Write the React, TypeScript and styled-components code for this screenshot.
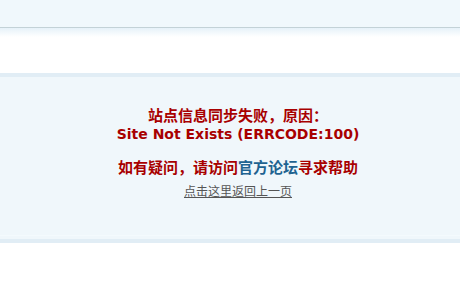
import React from "react";
import styled, { createGlobalStyle } from "styled-components";

const GlobalStyle = createGlobalStyle`
  html, body {
    margin: 0;
    padding: 0;
    background: #ffffff;
  }
  body {
    font-family: "Noto Sans CJK SC", "DejaVu Sans", sans-serif;
  }
`;

const Header = styled.div`
  height: 27px;
  background-color: #f0f8fc;
  border-bottom: 1px solid #c3d2d7;
`;

const Body = styled.div`
  padding-top: 45px;
  background: linear-gradient(to bottom, #e6f2f9 0px, #ffffff 9px, #ffffff 100%);
`;

const MessageBox = styled.div`
  border-top: 4px solid #e1edf5;
  border-bottom: 4px solid #e1edf5;
  background-color: #f0f7fb;
  padding: 29px 0 0 16px;
  height: 133px;
  text-align: center;
  position: relative;
  &::after {
    content: "";
    position: absolute;
    left: 0;
    right: 0;
    bottom: 3px;
    height: 1px;
    background-color: #f4fafd;
  }
`;

const Reason = styled.p`
  margin: 0;
  font-size: 15px;
  line-height: 18px;
  font-weight: 700;
  color: #a80000;
`;

const ErrorCode = styled.span`
  font-family: "DejaVu Sans", sans-serif;
  font-size: 14px;
  font-weight: 700;
`;

const Help = styled.p`
  margin: 15px 0 0;
  font-size: 15px;
  line-height: 18px;
  font-weight: 700;
  color: #a80000;
`;

const ForumLink = styled.a`
  color: #1f6391;
  text-decoration: none;
`;

const BackLink = styled.a`
  display: inline-block;
  margin-top: 6px;
  font-size: 12px;
  line-height: 18px;
  color: #555555;
  text-decoration: underline;
`;

export default function App() {
  return (
    <>
      <GlobalStyle />
      <Header />
      <Body>
        <MessageBox>
          <Reason>
            站点信息同步失败，原因：
            <br />
            <ErrorCode>Site Not Exists (ERRCODE:100)</ErrorCode>
          </Reason>
          <Help>
            如有疑问，请访问<ForumLink href="#">官方论坛</ForumLink>寻求帮助
          </Help>
          <BackLink href="#">点击这里返回上一页</BackLink>
        </MessageBox>
      </Body>
    </>
  );
}
